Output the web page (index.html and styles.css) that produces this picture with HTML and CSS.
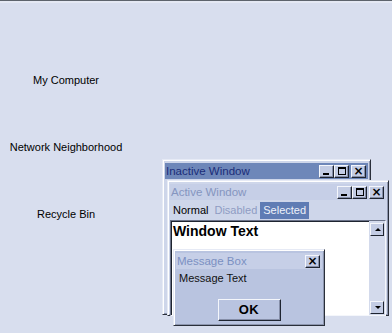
FILE: index.html
```html
<!DOCTYPE html>
<html>
<head>
<meta charset="utf-8">
<link rel="stylesheet" href="styles.css">
</head>
<body>
<div class="desk">
  <div class="icons">
    <div class="icon">My Computer</div>
    <div class="icon">Network Neighborhood</div>
    <div class="icon">Recycle Bin</div>
  </div>

  <div class="win inactive">
    <div class="title t-inactive">
      <span class="ttext">Inactive Window</span>
      <div class="btns">
        <div class="cb"><span class="g-min"></span></div>
        <div class="cb"><span class="g-max"></span></div>
        <div class="cb cb-close"><span class="g-x">×</span></div>
      </div>
    </div>
  </div>

  <div class="win active">
    <div class="title t-active">
      <span class="ttext">Active Window</span>
      <div class="btns">
        <div class="cb"><span class="g-min"></span></div>
        <div class="cb"><span class="g-max"></span></div>
        <div class="cb cb-close"><span class="g-x">×</span></div>
      </div>
    </div>
    <div class="menu">
      <span class="mi">Normal</span>
      <span class="mi dis">Disabled</span>
      <span class="mi sel">Selected</span>
    </div>
    <div class="client">
      <div class="wtext">Window Text</div>
      <div class="scroll">
        <div class="sb"><span class="arr up"></span></div>
        <div class="sb"><span class="arr down"></span></div>
      </div>
    </div>
  </div>

  <div class="msg">
    <div class="title t-msg">
      <span class="ttext">Message Box</span>
      <div class="btns">
        <div class="cb"><span class="g-x">×</span></div>
      </div>
    </div>
    <div class="mtext">Message Text</div>
    <div class="okrow"><div class="ok">OK</div></div>
  </div>
</div>
</body>
</html>
```

FILE: styles.css
```css
* { box-sizing: border-box; }
html, body { margin: 0; padding: 0; }
body {
  width: 392px;
  height: 333px;
  overflow: hidden;
  background: #d8deee;
  font-family: "Liberation Sans", Arial, sans-serif;
  font-size: 11px;
}
.desk {
  position: relative;
  width: 392px;
  height: 333px;
  border-top: 1px solid #5d636c;
  box-shadow: inset 0 2px 0 #e4e8f3;
}
.icons {
  display: flex;
  flex-direction: column;
  align-items: center;
  width: 132px;
  padding-top: 73px;
  gap: 54px;
}
.icon {
  color: #000;
  font-size: 11px;
  line-height: 13px;
  white-space: nowrap;
}

.win, .msg {
  position: absolute;
  background: #ced6ea;
  border: 1px solid;
  border-color: #e6eaf5 #2a2f3a #2a2f3a #e6eaf5;
  box-shadow: inset 1px 1px 0 #ffffff, inset -1px -1px 0 #8d96ae;
  padding: 3px 2px 3px 2px;
}
.inactive { left: 162px; top: 158px; width: 209px; height: 156px; }
.active { left: 167px; top: 179px; width: 222px; height: 136px; }
.msg { left: 173px; top: 248px; width: 152px; height: 77px; background: #b9c4e0; }

.title {
  height: 16px;
  display: flex;
  align-items: center;
  justify-content: space-between;
  padding: 0 2px 0 1px;
}
.ttext { font-size: 11.5px; line-height: 16px; white-space: nowrap; }
.t-inactive { background: #6e87b9; color: #1a2c78; }
.t-active { background: #c6cfe7; color: #8595bf; }
.t-msg { background: #c6cfe7; color: #7b90c2; }

.btns { display: flex; gap: 0; }
.cb {
  width: 15px;
  height: 13px;
  background: #c3cce4;
  border: 1px solid;
  border-color: #f4f6fb #1e2430 #1e2430 #f4f6fb;
  box-shadow: inset -1px -1px 0 #858ea8;
  position: relative;
  display: flex;
  align-items: center;
  justify-content: center;
}
.cb-close { margin-left: 2px; }
.g-min { position: absolute; left: 3px; bottom: 2px; width: 6px; height: 2px; background: #000; }
.g-max { width: 8px; height: 8px; border: 1px solid #000; border-top-width: 2px; }
.g-x { font-size: 12px; font-weight: bold; line-height: 10px; color: #000; font-family: "DejaVu Sans", sans-serif; }

.menu {
  height: 17px;
  display: flex;
  align-items: center;
  margin-top: 2px;
  font-size: 11px;
}
.mi { padding: 0 3px; line-height: 17px; color: #000; }
.dis { color: #8e9cc3; }
.sel { background: #5f7cb4; color: #eef2fa; }

.client {
  margin-top: 1px;
  height: 96px;
  background: #fff;
  border: 1px solid;
  border-color: #6a7288 #f4f6fb #f4f6fb #6a7288;
  box-shadow: inset 1px 1px 0 #1e2430;
  display: flex;
  justify-content: space-between;
}
.wtext { font-size: 14px; font-weight: bold; padding: 1px 0 0 2px; line-height: 18px; }
.scroll {
  width: 16px;
  background: #d3daec;
  display: flex;
  flex-direction: column;
  justify-content: space-between;
  padding: 2px 1px 1px 1px;
}
.sb {
  height: 13px;
  background: #c3cce4;
  border: 1px solid;
  border-color: #f4f6fb #1e2430 #1e2430 #f4f6fb;
  position: relative;
}
.arr { position: absolute; left: 4px; width: 0; height: 0; border-left: 3px solid transparent; border-right: 3px solid transparent; }
.up { top: 4px; border-bottom: 3px solid #000; }
.down { top: 4px; border-top: 3px solid #000; }

.mtext { font-size: 11px; padding: 2px 0 0 3px; line-height: 15px; color: #111; }
.okrow { display: flex; justify-content: center; padding-top: 13px; }
.ok {
  width: 63px;
  height: 22px;
  border: 1px solid;
  border-color: #f4f6fb #1e2430 #1e2430 #f4f6fb;
  box-shadow: inset -1px -1px 0 #858ea8;
  background: #b9c4e0;
  font-size: 13px;
  font-weight: bold;
  letter-spacing: 0.5px;
  text-align: center;
  line-height: 20px;
  color: #000;
}
```
